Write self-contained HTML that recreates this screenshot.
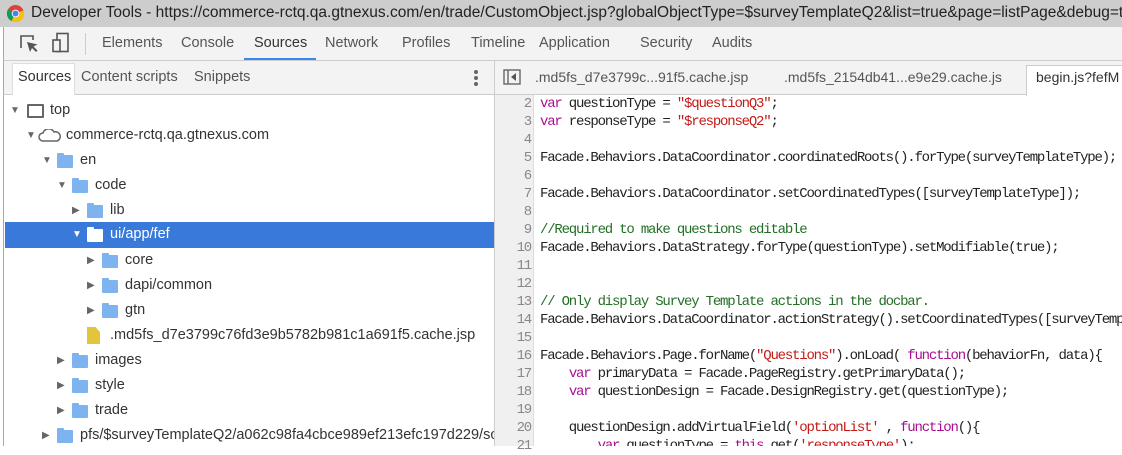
<!DOCTYPE html>
<html><head><meta charset="utf-8"><style>
*{margin:0;padding:0;box-sizing:border-box}
body{width:1122px;height:446px;overflow:hidden;background:#fff;font-family:"Liberation Sans",sans-serif;position:relative;color:#333}
.abs{position:absolute;white-space:nowrap}
#title{left:0;top:0;width:1122px;height:27px;background:#cdcdcd}
#title span{position:absolute;left:31px;top:4px;font-size:15.5px;color:#222}
#tb{left:3px;top:27px;width:1119px;height:34px;background:#f3f3f3;border-left:1px solid #a8a8a8;border-bottom:1px solid #cdcdcd}
.tab{position:absolute;top:8px;font-size:14.5px;color:#555}
#sub{left:3px;top:61px;width:492px;height:34px;background:#f3f3f3;border-left:1px solid #a8a8a8;border-bottom:1px solid #cdcdcd;border-right:1px solid #cdcdcd}
#rsub{left:495px;top:61px;width:627px;height:34px;background:#f3f3f3;border-bottom:1px solid #cdcdcd}
#left{left:3px;top:95px;width:492px;height:351px;border-left:1px solid #a8a8a8;border-right:1px solid #cdcdcd}
.row{position:absolute;height:25px;font-size:14.5px;line-height:25px;color:#333;white-space:nowrap}
.arr{position:absolute;top:0;font-size:10px;color:#666}
.fold{position:absolute;top:7px;width:16px;height:13px;background:#7db4f0;border-radius:1px}
.fold:before{content:"";position:absolute;left:0;top:-2px;width:7px;height:3px;background:#7db4f0;border-radius:1px 1px 0 0}
.wf,.wf:before{background:#fff!important}
#gut{left:495px;top:95px;width:39px;height:351px;background:#f0f0f0;border-right:1px solid #ddd}
.ln{position:absolute;right:3px;width:36px;text-align:right;font:14px/18px "Liberation Mono",monospace;letter-spacing:-1.2px;color:#888}
.cl{position:absolute;left:540px;font:14px/18px "Liberation Mono",monospace;letter-spacing:-1.2px;color:#222;white-space:pre}
.k{color:#aa0d91}.s{color:#c41a16}.c{color:#236e25}
</style></head><body>
<div id="title" class="abs">
<svg style="position:absolute;left:7px;top:5px" width="17" height="17" viewBox="0 0 16 16"><circle cx="8" cy="8" r="8" fill="#db4437"/><path d="M8 8 L15.5 5 A8 8 0 0 1 4 15 Z" fill="#f4c20d"/><path d="M8 8 L4 15 A8 8 0 0 1 1 4 Z" fill="#0f9d58"/><circle cx="8" cy="8" r="3.6" fill="#fff"/><circle cx="8" cy="8" r="2.8" fill="#4285f4"/></svg>
<span>Developer Tools - https://commerce-rctq.qa.gtnexus.com/en/trade/CustomObject.jsp?globalObjectType=$surveyTemplateQ2&amp;list=true&amp;page=listPage&amp;debug=true</span></div>
<div id="tb" class="abs">
<svg style="position:absolute;left:15px;top:7px" width="20" height="20" viewBox="0 0 20 20"><path d="M2 14V2h12v4" fill="none" stroke="#555" stroke-width="1.6"/><path d="M8 8l3 10 2-4 4 4 1.5-1.5-4-4 4-2z" fill="#555"/></svg>
<svg style="position:absolute;left:47px;top:5px" width="20" height="22" viewBox="0 0 20 22"><rect x="6" y="1.5" width="11" height="18" fill="none" stroke="#555" stroke-width="1.6"/><rect x="2" y="8" width="7" height="11.5" fill="#f3f3f3" stroke="#555" stroke-width="1.6"/></svg>
<div style="position:absolute;left:81px;top:6px;width:1px;height:22px;background:#ccc"></div>
<span class="tab" style="left:98px">Elements</span>
<span class="tab" style="left:177px">Console</span>
<span class="tab" style="left:250px;color:#333">Sources</span>
<div style="position:absolute;left:240px;top:31px;width:72px;height:2px;background:#3d85f0"></div>
<span class="tab" style="left:321px">Network</span>
<span class="tab" style="left:398px">Profiles</span>
<span class="tab" style="left:467px">Timeline</span>
<span class="tab" style="left:535px">Application</span>
<span class="tab" style="left:636px">Security</span>
<span class="tab" style="left:708px">Audits</span>
</div>
<div id="sub" class="abs">
<div style="position:absolute;left:8px;top:2px;width:63px;height:32px;background:#fff;border:1px solid #ddd;border-bottom:none"></div>
<span class="tab" style="left:14px;color:#333">Sources</span>
<span class="tab" style="left:77px">Content scripts</span>
<span class="tab" style="left:190px">Snippets</span>
<div style="position:absolute;left:470px;top:9px;width:4px;height:4px;border-radius:2px;background:#666;box-shadow:0 6px 0 #666,0 12px 0 #666"></div>
</div>
<div id="rsub" class="abs">
<svg style="position:absolute;left:8px;top:8px" width="18" height="16" viewBox="0 0 18 16"><rect x="1" y="1" width="16" height="14" fill="none" stroke="#666" stroke-width="1.4"/><line x1="5" y1="1" x2="5" y2="15" stroke="#666" stroke-width="1.4"/><path d="M13 4v8l-5-4z" fill="#555"/></svg>
<span class="tab" style="left:40px;font-size:14px">.md5fs_d7e3799c...91f5.cache.jsp</span>
<span class="tab" style="left:289px;font-size:14px">.md5fs_2154db41...e9e29.cache.js</span>
<div style="position:absolute;left:531px;top:4px;width:100px;height:31px;background:#fff;border:1px solid #ccc;border-bottom:none"></div>
<span class="tab" style="left:541px;font-size:14px;color:#333">begin.js?fefM</span>
</div>
<div id="left" class="abs">
<div class="row" style="top:3px;left:0;width:490px"><span class="arr" style="left:6px">▼</span><span style="position:absolute;left:23px;top:6px;width:17px;height:14px;border:2px solid #666;border-radius:1px"></span><span style="position:absolute;left:46px">top</span></div>
<div class="row" style="top:28px;left:0;width:490px"><span class="arr" style="left:22px">▼</span><svg style="position:absolute;left:34px;top:6px" width="24" height="13" viewBox="0 0 24 13"><path d="M5 12a4 4 0 0 1 0-8 6 6 0 0 1 11-1 4.5 4.5 0 0 1 3 9z" fill="none" stroke="#666" stroke-width="1.5"/></svg><span style="position:absolute;left:62px">commerce-rctq.qa.gtnexus.com</span></div>
<div class="row" style="top:53px;left:0;width:490px"><span class="arr" style="left:38px">▼</span><span class="fold" style="left:53px"></span><span style="position:absolute;left:76px">en</span></div>
<div class="row" style="top:78px;left:0;width:490px"><span class="arr" style="left:53px">▼</span><span class="fold" style="left:68px"></span><span style="position:absolute;left:91px">code</span></div>
<div class="row" style="top:103px;left:0;width:490px"><span class="arr" style="left:68px">▶</span><span class="fold" style="left:83px"></span><span style="position:absolute;left:106px">lib</span></div>
<div class="row" style="top:127px;left:1px;width:489px;height:26px;background:#3879d9;color:#fff"><span class="arr" style="left:67px;color:#fff">▼</span><span class="fold wf" style="left:82px"></span><span style="position:absolute;left:105px">ui/app/fef</span></div>
<div class="row" style="top:153px;left:0;width:490px"><span class="arr" style="left:83px">▶</span><span class="fold" style="left:98px"></span><span style="position:absolute;left:121px">core</span></div>
<div class="row" style="top:178px;left:0;width:490px"><span class="arr" style="left:83px">▶</span><span class="fold" style="left:98px"></span><span style="position:absolute;left:121px">dapi/common</span></div>
<div class="row" style="top:203px;left:0;width:490px"><span class="arr" style="left:83px">▶</span><span class="fold" style="left:98px"></span><span style="position:absolute;left:121px">gtn</span></div>
<div class="row" style="top:228px;left:0;width:490px"><span style="position:absolute;left:83px;top:4px;width:13px;height:17px;background:#e3c43b;clip-path:polygon(0 0,65% 0,100% 30%,100% 100%,0 100%)"></span><span style="position:absolute;left:106px">.md5fs_d7e3799c76fd3e9b5782b981c1a691f5.cache.jsp</span></div>
<div class="row" style="top:253px;left:0;width:490px"><span class="arr" style="left:53px">▶</span><span class="fold" style="left:68px"></span><span style="position:absolute;left:91px">images</span></div>
<div class="row" style="top:278px;left:0;width:490px"><span class="arr" style="left:53px">▶</span><span class="fold" style="left:68px"></span><span style="position:absolute;left:91px">style</span></div>
<div class="row" style="top:303px;left:0;width:490px"><span class="arr" style="left:53px">▶</span><span class="fold" style="left:68px"></span><span style="position:absolute;left:91px">trade</span></div>
<div class="row" style="top:328px;left:0;width:490px;overflow:hidden"><span class="arr" style="left:38px">▶</span><span class="fold" style="left:53px"></span><span style="position:absolute;left:76px">pfs/$surveyTemplateQ2/a062c98fa4cbce989ef213efc197d229/something</span></div>
</div>
<div id="gut" class="abs"></div>
<div class="abs" style="left:495px;top:95px;width:39px;height:351px">
<div class="ln" style="top:0">2</div><div class="ln" style="top:18px">3</div><div class="ln" style="top:36px">4</div><div class="ln" style="top:54px">5</div><div class="ln" style="top:72px">6</div><div class="ln" style="top:90px">7</div><div class="ln" style="top:108px">8</div><div class="ln" style="top:126px">9</div><div class="ln" style="top:144px">10</div><div class="ln" style="top:162px">11</div><div class="ln" style="top:180px">12</div><div class="ln" style="top:198px">13</div><div class="ln" style="top:216px">14</div><div class="ln" style="top:234px">15</div><div class="ln" style="top:252px">16</div><div class="ln" style="top:270px">17</div><div class="ln" style="top:288px">18</div><div class="ln" style="top:306px">19</div><div class="ln" style="top:324px">20</div><div class="ln" style="top:342px">21</div>
</div>
<div class="abs" style="left:0;top:95px;width:1122px;height:351px;overflow:hidden">
<div class="cl" style="top:0"><span class="k">var</span> questionType = <span class="s">"$questionQ3"</span>;</div>
<div class="cl" style="top:18px"><span class="k">var</span> responseType = <span class="s">"$responseQ2"</span>;</div>
<div class="cl" style="top:54px">Facade.Behaviors.DataCoordinator.coordinatedRoots().forType(surveyTemplateType);</div>
<div class="cl" style="top:90px">Facade.Behaviors.DataCoordinator.setCoordinatedTypes([surveyTemplateType]);</div>
<div class="cl c" style="top:126px">//Required to make questions editable</div>
<div class="cl" style="top:144px">Facade.Behaviors.DataStrategy.forType(questionType).setModifiable(true);</div>
<div class="cl c" style="top:198px">// Only display Survey Template actions in the docbar.</div>
<div class="cl" style="top:216px">Facade.Behaviors.DataCoordinator.actionStrategy().setCoordinatedTypes([surveyTemplateType]);</div>
<div class="cl" style="top:252px">Facade.Behaviors.Page.forName(<span class="s">"Questions"</span>).onLoad( <span class="k">function</span>(behaviorFn, data){</div>
<div class="cl" style="top:270px">    <span class="k">var</span> primaryData = Facade.PageRegistry.getPrimaryData();</div>
<div class="cl" style="top:288px">    <span class="k">var</span> questionDesign = Facade.DesignRegistry.get(questionType);</div>
<div class="cl" style="top:324px">    questionDesign.addVirtualField(<span class="s">'optionList'</span> , <span class="k">function</span>(){</div>
<div class="cl" style="top:342px">        <span class="k">var</span> questionType = <span class="k">this</span>.get(<span class="s">'responseType'</span>);</div>
</div>
</body></html>
